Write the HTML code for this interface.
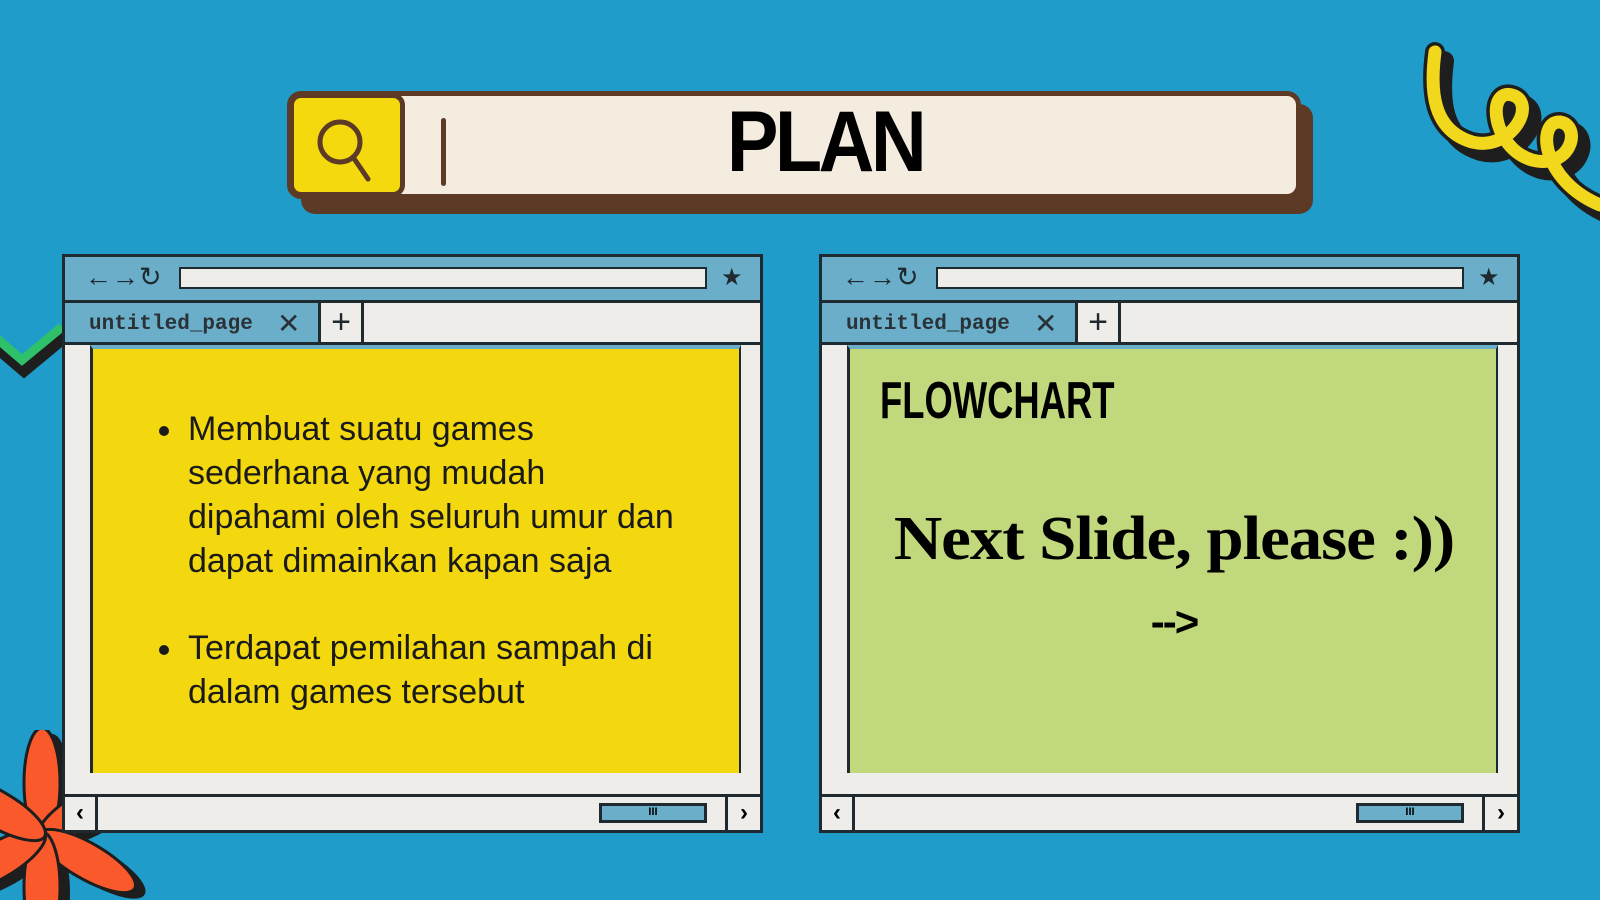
<!DOCTYPE html>
<html><head><meta charset="utf-8"><style>
*{margin:0;padding:0;box-sizing:border-box}
html,body{width:1600px;height:900px;overflow:hidden}
body{background:#1f9cc9;position:relative;font-family:"Liberation Sans",sans-serif}
.a{position:absolute}
.win{position:absolute;top:254px;width:701px;height:579px;background:#efede9;border:3px solid #1e2a30}
.tb{position:absolute;left:0;top:0;right:0;height:46px;background:#6aaec9;border-bottom:3px solid #1e2a30}
.addr{position:absolute;left:114px;top:10px;width:528px;height:22px;background:#efede9;border:2px solid #1e2a30}
.nav{position:absolute;left:20px;top:5px;font-size:27px;color:#1e2a30;letter-spacing:0px}
.star{position:absolute;left:656px;top:6px;font-size:24px;color:#1e2a30}
.tab{position:absolute;left:0;top:46px;width:256px;height:42px;background:#6aaec9;border-right:3px solid #1e2a30;border-bottom:3px solid #1e2a30;font-family:"Liberation Mono",monospace;font-weight:bold;font-size:21px;color:#2a3238;padding:10px 0 0 24px}
.tab span{position:absolute;left:212px;top:4px;font-family:"Liberation Sans";font-weight:normal;font-size:28px}
.plus{position:absolute;left:256px;top:46px;width:43px;height:42px;border-right:3px solid #1e2a30;border-bottom:3px solid #1e2a30;font-size:34px;text-align:center;line-height:38px;color:#1e2a30}
.rest{position:absolute;left:299px;right:0;top:46px;height:42px;border-bottom:3px solid #1e2a30}
.content{position:absolute;left:25px;top:88px;width:651px;height:428px;border-left:3px solid #1e2a30;border-right:2px solid #1e2a30;border-top:4px solid #6aaec9}
.sb{position:absolute;left:0;right:0;bottom:0;height:36px;border-top:3px solid #1e2a30}
.sl{position:absolute;left:0;top:0;width:33px;height:33px;border-right:3px solid #1e2a30;text-align:center;font-size:24px;line-height:32px;font-weight:bold}
.sr{position:absolute;right:0;top:0;width:35px;height:33px;border-left:3px solid #1e2a30;text-align:center;font-size:24px;line-height:32px;font-weight:bold}
.th{position:absolute;left:534px;top:6px;width:108px;height:20px;background:#6aaec9;border:3px solid #1e2a30;font-size:11px;text-align:center;line-height:13px;font-weight:bold}
ul{position:absolute;left:95px;top:58px;width:540px;font-size:34px;line-height:44px;color:#1a1a1a;list-style:none;white-space:nowrap}
li{position:relative;margin-bottom:43px}
li:before{content:"";position:absolute;left:-29px;top:19px;width:10px;height:10px;border-radius:50%;background:#1a1a1a}
</style></head><body>
<svg class="a" style="left:1400px;top:30px" width="200" height="220" viewBox="0 0 200 220">
<g fill="none" stroke-linecap="round">
<path d="M35 22 C30 60 32 100 72 112 C112 122 138 72 112 65 C86 58 92 118 132 130 C172 140 182 95 160 92 C137 90 140 150 200 175" stroke="#1e1e1e" stroke-width="20" transform="translate(9,9)"/>
<path d="M35 22 C30 60 32 100 72 112 C112 122 138 72 112 65 C86 58 92 118 132 130 C172 140 182 95 160 92 C137 90 140 150 200 175" stroke="#1e1e1e" stroke-width="20"/>
<path d="M35 22 C30 60 32 100 72 112 C112 122 138 72 112 65 C86 58 92 118 132 130 C172 140 182 95 160 92 C137 90 140 150 200 175" stroke="#f2d81c" stroke-width="13"/>
</g></svg>
<svg class="a" style="left:0;top:315px" width="80" height="70"><path d="M-5 22 L22 45 L62 12" fill="none" stroke="#1e1e1e" stroke-width="16" transform="translate(2,8)"/><path d="M-5 22 L22 45 L62 12" fill="none" stroke="#2ec16a" stroke-width="9"/></svg>
<svg class="a" style="left:0;top:730px" width="160" height="170" viewBox="0 0 160 170">
<g transform="translate(42,105)">
<g fill="#1e1e1e" transform="translate(10,6)">
<ellipse rx="18" ry="55" cy="-52"/><ellipse rx="18" ry="55" cy="-52" transform="rotate(60)"/><ellipse rx="18" ry="55" cy="-52" transform="rotate(120)"/><ellipse rx="18" ry="55" cy="-52" transform="rotate(180)"/><ellipse rx="18" ry="55" cy="-52" transform="rotate(240)"/><ellipse rx="18" ry="55" cy="-52" transform="rotate(300)"/></g>
<g fill="#fa5a2b" stroke="#1e1e1e" stroke-width="3">
<ellipse rx="18" ry="55" cy="-52"/><ellipse rx="18" ry="55" cy="-52" transform="rotate(60)"/><ellipse rx="18" ry="55" cy="-52" transform="rotate(120)"/><ellipse rx="18" ry="55" cy="-52" transform="rotate(180)"/><ellipse rx="18" ry="55" cy="-52" transform="rotate(240)"/><ellipse rx="18" ry="55" cy="-52" transform="rotate(300)"/></g>
</g></svg>
<div class="a" style="left:301px;top:104px;width:1012px;height:110px;background:#5c3a26;border-radius:14px"></div>
<div class="a" style="left:287px;top:91px;width:1014px;height:108px;background:#f5ece0;border:5px solid #5c3a26;border-radius:14px"></div>
<div class="a" style="left:289px;top:93px;width:116px;height:104px;background:#f4d90f;border:5px solid #5c3a26;border-radius:12px"></div>
<svg class="a" style="left:310px;top:112px" width="70" height="75"><circle cx="30" cy="30" r="20" fill="none" stroke="#5c3a26" stroke-width="5"/><path d="M43 45 L58 67" stroke="#5c3a26" stroke-width="5" stroke-linecap="round"/></svg>
<div class="a" style="left:441px;top:118px;width:5px;height:68px;background:#5c3a26;border-radius:3px"></div>
<div class="a" style="left:700px;top:92px;width:250px;text-align:center;font-size:86px;font-weight:900;letter-spacing:-4px;color:#000;line-height:100px;transform:scaleX(0.9)">PLAN</div>

<div class="win" style="left:62px">
<div class="tb"><div class="nav">←→↻</div><div class="addr"></div><div class="star">★</div></div>
<div class="tab">untitled_page<span>✕</span></div><div class="plus">+</div><div class="rest"></div>
<div class="content" style="background:#f3d80f">
<ul><li>Membuat suatu games<br>sederhana yang mudah<br>dipahami oleh seluruh umur dan<br>dapat dimainkan kapan saja</li><li>Terdapat pemilahan sampah di<br>dalam games tersebut</li></ul>
</div>
<div class="sb"><div class="sl">‹</div><div class="th">III</div><div class="sr">›</div></div>
</div>

<div class="win" style="left:819px">
<div class="tb"><div class="nav">←→↻</div><div class="addr"></div><div class="star">★</div></div>
<div class="tab">untitled_page<span>✕</span></div><div class="plus">+</div><div class="rest"></div>
<div class="content" style="background:#c1d97c">
<div class="a" style="left:30px;top:22px;font-size:52px;font-weight:900;transform:scaleX(0.7);transform-origin:left;color:#000;line-height:60px">FLOWCHART</div>
<div class="a" style="left:0;width:648px;top:155px;text-align:center;font-family:'Liberation Serif',serif;font-weight:bold;font-size:62px;letter-spacing:-1px;color:#000;line-height:70px;transform:scaleX(1.08)">Next Slide, please :))</div>
<div class="a" style="left:0;width:648px;top:248px;text-align:center;font-family:'Liberation Sans',sans-serif;font-weight:bold;font-size:42px;color:#000;line-height:50px;letter-spacing:-2px">--&gt;</div>
</div>
<div class="sb"><div class="sl">‹</div><div class="th">III</div><div class="sr">›</div></div>
</div>
</body></html>
